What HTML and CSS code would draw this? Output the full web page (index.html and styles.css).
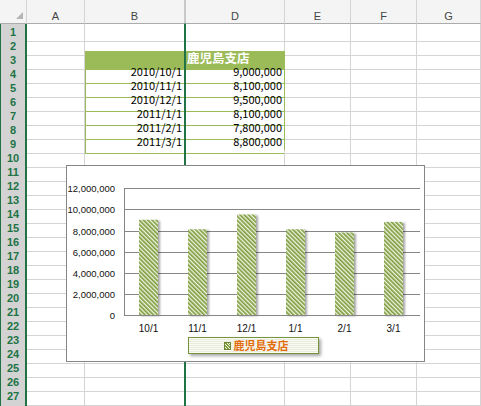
FILE: index.html
```html
<!DOCTYPE html>

<html>
<head>
    <meta charset="utf-8">
    <title>鹿児島支店</title>
    <link rel="stylesheet" href="styles.css">
</head>
<body>

    <div id="sheet">
        <div class="row head">
            <div class="corner"><span class="tri"></span></div>
            <div class="col">A</div>
            <div class="col col-b">B</div>
            <div class="col gap"></div>
            <div class="col">D</div>
            <div class="col">E</div>
            <div class="col">F</div>
            <div class="col">G</div>
        </div>

        <!-- rows 1..28 are built by the script -->
        <div id="rows"></div>

        <div id="chart">
            <svg class="plot" width="357" height="171" viewBox="0 0 357 171">
                <defs>
                    <pattern id="hatch" width="3" height="3" patternUnits="userSpaceOnUse" patternTransform="rotate(-45)">
                        <rect width="3" height="3" fill="#f1f6e6"/>
                        <rect width="1.7" height="3" fill="#7f9d3e"/>
                    </pattern>
                    <filter id="shadow" x="-20%" y="-10%" width="160%" height="125%">
                        <feDropShadow dx="2" dy="1" stdDeviation="1" flood-color="#000" flood-opacity="0.35"/>
                    </filter>
                </defs>

                <!-- gridlines -->
                <g class="grid">
                    <line x1="57" y1="22.5" x2="353" y2="22.5"/>
                    <line x1="57" y1="43.5" x2="353" y2="43.5"/>
                    <line x1="57" y1="65.5" x2="353" y2="65.5"/>
                    <line x1="57" y1="86.5" x2="353" y2="86.5"/>
                    <line x1="57" y1="107.5" x2="353" y2="107.5"/>
                    <line x1="57" y1="128.5" x2="353" y2="128.5"/>
                    <line x1="57.5" y1="22" x2="57.5" y2="150"/>
                </g>

                <!-- bars -->
                <g fill="url(#hatch)" filter="url(#shadow)">
                    <rect x="72" y="53.8" width="19" height="95.2"/>
                    <rect x="121" y="63.3" width="19" height="85.7"/>
                    <rect x="170" y="48.5" width="19" height="100.5"/>
                    <rect x="219" y="63.3" width="19" height="85.7"/>
                    <rect x="268" y="66.5" width="19" height="82.5"/>
                    <rect x="317" y="55.9" width="19" height="93.1"/>
                </g>

                <line class="axis" x1="57" y1="149.5" x2="353" y2="149.5"/>

                <!-- value axis -->
                <g class="ylab">
                    <text x="48" y="26">12,000,000</text>
                    <text x="48" y="47">10,000,000</text>
                    <text x="48" y="69">8,000,000</text>
                    <text x="48" y="90">6,000,000</text>
                    <text x="48" y="111">4,000,000</text>
                    <text x="48" y="132">2,000,000</text>
                    <text x="48" y="153">0</text>
                </g>

                <!-- category axis -->
                <g class="xlab">
                    <text x="81.5" y="166">10/1</text>
                    <text x="130.5" y="166">11/1</text>
                    <text x="179.5" y="166">12/1</text>
                    <text x="228.5" y="166">1/1</text>
                    <text x="277.5" y="166">2/1</text>
                    <text x="326.5" y="166">3/1</text>
                </g>
            </svg>

            <div class="legend">
                <span class="key"></span>
                <span class="name">鹿児島支店</span>
            </div>
        </div>
    </div>

    <script>
        // Table data
        let dates = ['2010/10/1', '2010/11/1', '2010/12/1', '2011/1/1', '2011/2/1', '2011/3/1'];
        let sales = ['9,000,000', '8,100,000', '9,500,000', '8,100,000', '7,800,000', '8,800,000'];

        let rows = document.getElementById('rows');

        for (let i = 1; i <= 28; i++) {
            let b = '';
            let d = '';
            let cls = '';

            if (i == 3) {
                cls = ' th';
                d = '鹿児島支店';
            } else if (i >= 4 && i <= 9) {
                cls = ' tb';
                b = dates[i - 4];
                d = sales[i - 4];
            }

            let row = document.createElement('div');
            row.className = 'row';
            row.innerHTML =
                '<div class="rh">' + i + '</div>' +
                '<div></div>' +
                '<div class="cb' + cls + '">' + b + '</div>' +
                '<div class="gap"></div>' +
                '<div class="cd' + cls + '">' + d + '</div>' +
                '<div></div>' +
                '<div></div>' +
                '<div></div>';
            rows.appendChild(row);
        }
    </script>
</body>
</html>
```

FILE: styles.css
```css
body {
    margin: 0;
    overflow: hidden;
    background: #fff;
    font-family: "Liberation Sans", Arial, sans-serif;
}

#sheet {
    position: relative;
    width: 481px;
    height: 406px;
    overflow: hidden;
}

/* every row shares the same column widths */
.row {
    display: grid;
    grid-template-columns: 27px 58px 99px 2px 99px 66px 66px 64px;
    height: 14px;
}

.row > div {
    box-sizing: border-box;
    border-right: 1px solid #d4d4d4;
    border-bottom: 1px solid #d4d4d4;
}

/* column headers */
.row.head {
    height: 24px;
    background: #f4f4f4;
}

.row.head > div {
    border-bottom: 1px solid #ababab;
}

.col {
    padding-top: 9px;
    font-size: 11px;
    line-height: 14px;
    color: #444;
    text-align: center;
}

.row.head > .col-b {
    border-right: none;
}

.corner {
    display: flex;
    justify-content: flex-end;
    align-items: flex-end;
    padding: 0 3px 4px 0;
}

.tri {
    width: 7px;
    height: 7px;
    background: #b4b4b4;
    clip-path: polygon(100% 0, 100% 100%, 0 100%);
}

.row.head > .gap {
    background: #f4f4f4;
    border-left: 1px solid #c8c8c8;
    border-right: 1px solid #c8c8c8;
    border-bottom: 1px solid #217346;
}

/* row headers (all selected) */
.row > .rh {
    background: #d3d3d3;
    border-left: 1px solid #217346;
    border-right: 2px solid #217346;
    border-bottom: 1px solid #e4e4e4;
    font-size: 11px;
    font-weight: bold;
    line-height: 17px;
    color: #217346;
    text-align: center;
}

/* hidden column C */
.row > .gap {
    background: #217346;
    border: none;
}

.row > .cb {
    border-right: none;
}

/* table */
.cb, .cd {
    padding: 0 2px;
    font-family: "Noto Sans CJK JP", "Liberation Sans", sans-serif;
    font-size: 11px;
    line-height: 11px;
    text-align: right;
    color: #000;
}

.row > .tb {
    border-bottom-color: #9bbb59;
}

.row > .cb.tb {
    box-shadow: inset 1px 0 0 #9bbb59;
}

.row > .cd.tb,
.row > .cd.th {
    border-right-color: #9bbb59;
}

.row > .th {
    background: #9bbb59;
    border-bottom-color: #9bbb59;
    box-shadow: 0 -1px 0 #9bbb59;
}

.cd.th {
    padding-left: 1px;
    font-size: 12.5px;
    font-weight: bold;
    color: #fff;
    text-align: left;
}

/* chart floats over the sheet */
#chart {
    position: absolute;
    left: 66px;
    top: 165px;
    width: 359px;
    height: 197px;
    box-sizing: border-box;
    border: 1px solid #868686;
    background: #fff;
}

.plot {
    display: block;
}

.grid line,
.axis {
    stroke: #868686;
    stroke-width: 1;
}

.plot text {
    font-family: "Liberation Sans", Arial, sans-serif;
    font-size: 10px;
    fill: #111;
}

.ylab text {
    font-size: 9.5px;
    text-anchor: end;
}

.xlab text {
    text-anchor: middle;
}

.legend {
    margin-left: 121px;
    width: 131px;
    height: 17px;
    box-sizing: border-box;
    border: 1px solid #77933c;
    background: repeating-linear-gradient(to bottom, #fbfbf6 0 1px, #e9ecdc 1px 2px);
    box-shadow: 2px 2px 3px rgba(0, 0, 0, 0.35);
    display: flex;
    align-items: center;
    justify-content: center;
    gap: 3px;
    padding-left: 5px;
}

.key {
    width: 5px;
    height: 6px;
    border: 1px solid #6f8a36;
    background: repeating-linear-gradient(45deg, #7f9d3e 0 1px, #f1f6e6 1px 2px);
}

.name {
    font-family: "Noto Sans CJK JP", sans-serif;
    font-size: 11px;
    font-weight: bold;
    line-height: 13px;
    color: #e36c0a;
}
```
